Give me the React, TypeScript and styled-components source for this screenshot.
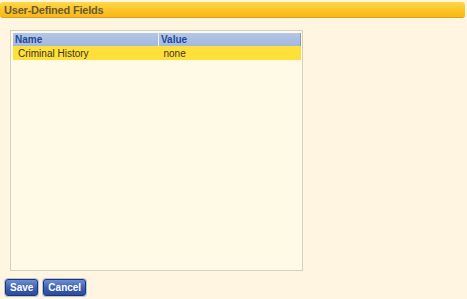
import { FC } from "react";
import styled, { createGlobalStyle } from "styled-components";

const GlobalStyle = createGlobalStyle`
	html, body {
		margin: 0;
		padding: 0;
		background-color: #fff5e1;
		font-family: "Liberation Sans", Arial, sans-serif;
	}
`;

const Page = styled.div`
	width: 467px;
	height: 299px;
	padding-top: 2px;
	box-sizing: border-box;
	display: flex;
	flex-direction: column;
`;

const TitleBar = styled.div`
	height: 15px;
	margin: 0 2px 0 0;
	border-radius: 3px;
	border-bottom: 1px solid #e0a010;
	background: linear-gradient(to bottom, #ffd94a 0%, #fcc62a 50%, #f8b818 100%);
	display: flex;
	align-items: center;
	padding-left: 4px;
	font-size: 11px;
	font-weight: 700;
	color: #6b5a3a;
	letter-spacing: -0.2px;
`;

const Content = styled.div`
	padding: 12px 0 0 10px;
	display: flex;
	flex-direction: column;
`;

const Panel = styled.div`
	width: 293px;
	height: 241px;
	background-color: #fffae5;
	border: 1px solid #d4d0c4;
	padding: 2px;
	box-sizing: border-box;
`;

const Table = styled.table`
	width: 288px;
	border-collapse: collapse;
	font-size: 10px;
`;

const HeadCell = styled.th<{ $first?: boolean }>`
	height: 13px;
	padding: 0 0 0 2px;
	text-align: left;
	font-weight: 700;
	color: #1f4a9c;
	background: linear-gradient(to bottom, #b4c6e6, #a3b8de);
	border-right: ${p => (p.$first ? "1px solid #f0f0f0" : "1px solid #8c97a8")};
	width: ${p => (p.$first ? "143px" : "auto")};
`;

const Cell = styled.td`
	height: 14px;
	padding: 0 0 0 5px;
	color: #3a3426;
	background-color: #ffdf3a;
`;

const Buttons = styled.div`
	display: flex;
	gap: 5px;
	margin: 8px 0 0 -5px;
`;

const Button = styled.button`
	height: 17px;
	padding: 0 4px;
	border: 1px solid #1d3570;
	border-radius: 3px;
	background: linear-gradient(to bottom, #6f8fd0 0%, #3f62b4 50%, #2c4c9c 100%);
	color: #ffffff;
	font-family: "Liberation Sans", Arial, sans-serif;
	font-size: 10px;
	font-weight: 700;
	box-shadow: 0 0 0 1px #b8c4dc;
	cursor: pointer;
`;

const rows = [{ name: "Criminal History", value: "none" }];

const App: FC = () => {
	return (
		<>
			<GlobalStyle />
			<Page>
				<TitleBar>User-Defined Fields</TitleBar>
				<Content>
					<Panel>
						<Table>
							<thead>
								<tr>
									<HeadCell $first>Name</HeadCell>
									<HeadCell>Value</HeadCell>
								</tr>
							</thead>
							<tbody>
								{rows.map(row => (
									<tr key={row.name}>
										<Cell>{row.name}</Cell>
										<Cell>{row.value}</Cell>
									</tr>
								))}
							</tbody>
						</Table>
					</Panel>
					<Buttons>
						<Button>Save</Button>
						<Button>Cancel</Button>
					</Buttons>
				</Content>
			</Page>
		</>
	);
};

export default App;
